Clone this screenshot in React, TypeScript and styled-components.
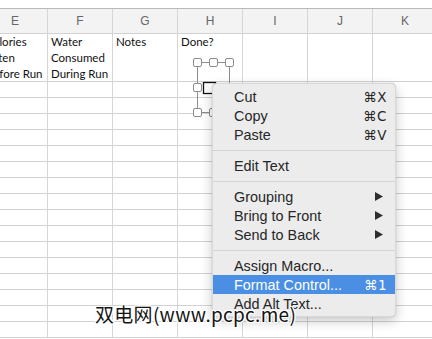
import React from "react";
import styled, { createGlobalStyle } from "styled-components";

const GlobalStyle = createGlobalStyle`
  html, body { margin: 0; padding: 0; background: #ffffff; overflow: hidden; }
  * { box-sizing: border-box; }
`;

const Page = styled.div`
  position: relative;
  width: 432px;
  height: 339px;
  overflow: hidden;
  background: #ffffff;
  padding-top: 8px;
`;

const Sheet = styled.div`
  margin-left: -17px;
  width: 470px;
  border-top: 1px solid #b9b9b9;
`;

const Row = styled.div<{ $h: number; $bg?: string }>`
  display: grid;
  grid-template-columns: repeat(7, 65px);
  height: ${(p) => p.$h}px;
  background: ${(p) => p.$bg || "#ffffff"};
  border-bottom: 1px solid #d2d2d2;
`;

const ColHead = styled.div`
  border-right: 1px solid #d6d6d6;
  display: flex;
  align-items: center;
  justify-content: center;
  font-family: "Liberation Sans", Arial, sans-serif;
  font-size: 12px;
  color: #666666;
`;

const Cell = styled.div`
  border-right: 1px solid #d6d6d6;
  padding: 0 2px 0 3px;
  font-family: Lato, "Open Sans", sans-serif;
  font-size: 11.5px;
  line-height: 16px;
  color: #111;
  white-space: pre-line;
  overflow: hidden;
`;

const Menu = styled.div`
  position: absolute;
  left: 212px;
  top: 83px;
  width: 184px;
  padding: 3px 0;
  background: #ececec;
  border-radius: 5px;
  border: 1px solid rgba(0, 0, 0, 0.08);
  box-shadow: 0 4px 12px rgba(0, 0, 0, 0.22), 0 0 1px rgba(0, 0, 0, 0.25);
  z-index: 2;
  font-family: "Liberation Sans", Arial, sans-serif;
`;

const Item = styled.div<{ $active?: boolean }>`
  display: flex;
  align-items: center;
  justify-content: space-between;
  height: 19px;
  padding: 0 8px 0 21px;
  font-size: 14.4px;
  color: ${(p) => (p.$active ? "#ffffff" : "#262626")};
  background: ${(p) => (p.$active ? "#4a8fe3" : "transparent")};
`;

const Shortcut = styled.span`
  font-family: "DejaVu Sans", "Liberation Sans", sans-serif;
  font-size: 13.5px;
  letter-spacing: 0.5px;
`;

const Arrow = styled.svg`
  width: 8px;
  height: 9px;
  margin-right: 4px;
`;

const Separator = styled.div`
  height: 12px;
  display: flex;
  align-items: center;
  &::after {
    content: "";
    flex: 1;
    height: 1px;
    background: #d3d3d3;
  }
`;

const Handles = styled.svg`
  position: absolute;
  left: 0;
  top: 0;
  z-index: 1;
`;

const Watermark = styled.div`
  position: absolute;
  left: 95px;
  top: 302px;
  z-index: 3;
  font-family: "Noto Sans CJK SC", "DejaVu Sans", sans-serif;
  font-size: 19px;
  line-height: 24px;
  color: #141414;
  letter-spacing: 0.3px;
  text-shadow: 1px 0 0 #fff, -1px 0 0 #fff, 0 1px 0 #fff, 0 -1px 0 #fff,
    1px 1px 0 #fff, -1px -1px 0 #fff, 1px -1px 0 #fff, -1px 1px 0 #fff;
`;

const cols = ["E", "F", "G", "H", "I", "J", "K"];
const titles = ["Calories\nEaten\nBefore Run", "Water\nConsumed\nDuring Run", "Notes", "Done?", "", "", ""];

type MenuEntry =
  | { kind: "item"; label: string; shortcut?: string; submenu?: boolean; active?: boolean }
  | { kind: "sep" };

const menu: MenuEntry[] = [
  { kind: "item", label: "Cut", shortcut: "⌘X" },
  { kind: "item", label: "Copy", shortcut: "⌘C" },
  { kind: "item", label: "Paste", shortcut: "⌘V" },
  { kind: "sep" },
  { kind: "item", label: "Edit Text" },
  { kind: "sep" },
  { kind: "item", label: "Grouping", submenu: true },
  { kind: "item", label: "Bring to Front", submenu: true },
  { kind: "item", label: "Send to Back", submenu: true },
  { kind: "sep" },
  { kind: "item", label: "Assign Macro..." },
  { kind: "item", label: "Format Control...", shortcut: "⌘1", active: true },
  { kind: "item", label: "Add Alt Text..." },
];

const Handle = ({ x, y }: { x: number; y: number }) => (
  <rect x={x + 0.5} y={y + 0.5} width={8} height={8} rx={1.5} fill="#fff" stroke="#8c8c8c" strokeWidth={1} />
);

export default function App() {
  const dataRows = Array.from({ length: 16 });
  return (
    <>
      <GlobalStyle />
      <Page>
        <Sheet>
          <Row $h={25} $bg="#f3f3f3">
            {cols.map((c) => (
              <ColHead key={c}>{c}</ColHead>
            ))}
          </Row>
          <Row $h={48}>
            {titles.map((t, i) => (
              <Cell key={i}>{t}</Cell>
            ))}
          </Row>
          {dataRows.map((_, r) => (
            <Row key={r} $h={16}>
              {cols.map((c) => (
                <Cell key={c} />
              ))}
            </Row>
          ))}
        </Sheet>

        <Handles width={432} height={339} viewBox="0 0 432 339">
          <g stroke="#8c8c8c" strokeWidth={1} fill="none">
            <line x1={202} y1={62.5} x2={209} y2={62.5} />
            <line x1={218} y1={62.5} x2={225} y2={62.5} />
            <line x1={197.5} y1={67} x2={197.5} y2={83} />
            <line x1={197.5} y1={92} x2={197.5} y2={108} />
            <line x1={229.5} y1={67} x2={229.5} y2={90} />
            <line x1={202} y1={112.5} x2={209} y2={112.5} />
          </g>
          <Handle x={193} y={58} />
          <Handle x={209} y={58} />
          <Handle x={225} y={58} />
          <Handle x={193} y={83} />
          <Handle x={193} y={108} />
          <Handle x={209} y={108} />
          <rect x={203.5} y={82.5} width={12} height={11} fill="#fff" stroke="#111" strokeWidth={1.3} />
        </Handles>

        <Menu>
          {menu.map((m, i) =>
            m.kind === "sep" ? (
              <Separator key={i} />
            ) : (
              <Item key={i} $active={m.active}>
                <span>{m.label}</span>
                {m.shortcut && <Shortcut>{m.shortcut}</Shortcut>}
                {m.submenu && (
                  <Arrow viewBox="0 0 8 9">
                    <polygon points="0,0 8,4.5 0,9" fill="#2e2e2e" />
                  </Arrow>
                )}
              </Item>
            )
          )}
        </Menu>

        <Watermark>双电网(www.pcpc.me)</Watermark>
      </Page>
    </>
  );
}
